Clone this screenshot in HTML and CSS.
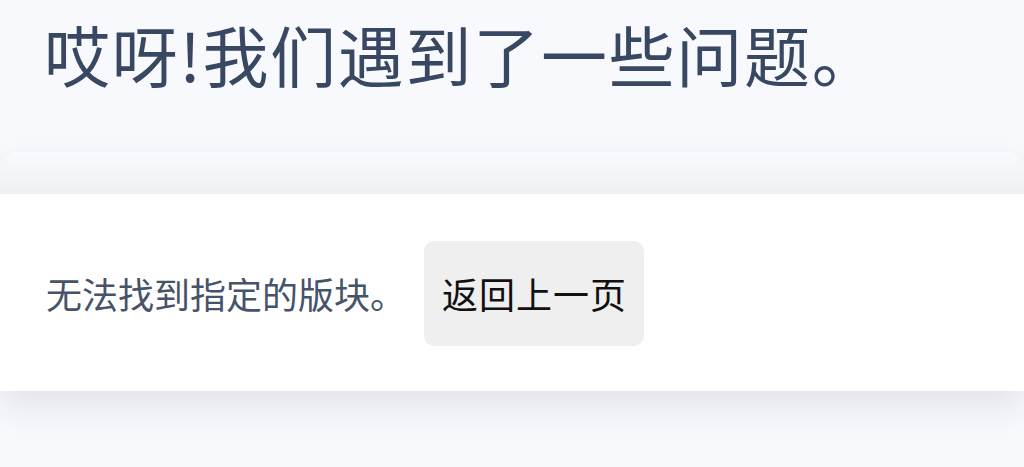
FILE: index.html
```html
<!DOCTYPE html>
<html lang="zh-CN">
<head>
    <meta charset="UTF-8">
    <meta name="viewport" content="width=device-width, initial-scale=1.0">
    <title>出错了</title>
    <link rel="stylesheet" href="styles.css">
</head>
<body>

<div class="page">
    <h1 class="title">哎呀!我们遇到了一些问题。</h1>

    <div class="card">
        <div class="card-top"></div>
        <div class="card-body">
            <span class="message">无法找到指定的版块。</span>
            <button class="back-button" onclick="history.back()">返回上一页</button>
        </div>
    </div>
</div>

</body>
</html>
```

FILE: styles.css
```css
body {
    font-family: "Noto Sans CJK SC", "Noto Sans", sans-serif;
    background-color: #f8f9fd;
    margin: 0;
    padding: 0;
    min-height: 100vh;
    overflow: hidden;
}

.page {
    padding-top: 14px;
}

.title {
    margin: 0 0 59px 0;
    padding-left: 44px;
    font-size: 66px;
    font-weight: 400;
    line-height: 1.2;
    letter-spacing: 1.7px;
    color: #394862;
}

.card {
    border-radius: 18px 18px 0 0;
    background-color: #fff;
    box-shadow: 0 16px 36px rgba(30, 40, 70, 0.1);
}

.card-top {
    height: 42px;
    border-radius: 18px 18px 0 0;
    background: linear-gradient(to bottom, #f9fafd, #eff0f4);
}

.card-body {
    display: flex;
    align-items: center;
    gap: 18px;
    padding: 47px 46px 45px 46px;
    background-color: #fff;
}

.message {
    font-size: 36px;
    line-height: 1.4;
    color: #465368;
}

.back-button {
    font-family: inherit;
    font-size: 36px;
    line-height: 1.4;
    letter-spacing: 1px;
    padding: 27px 17px 27px 18px;
    background-color: #efefef;
    color: #111;
    border: none;
    border-radius: 10px;
    cursor: pointer;
}
```
